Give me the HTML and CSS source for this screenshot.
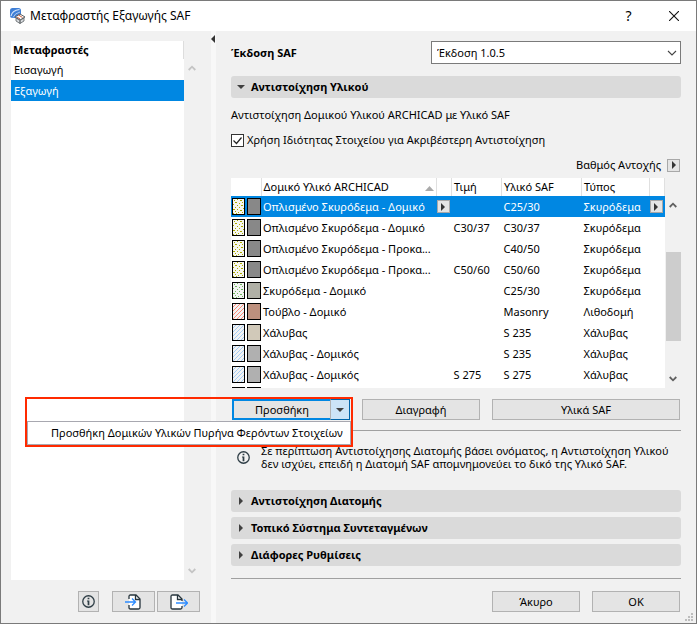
FILE: index.html
```html
<!DOCTYPE html>
<html lang="el">
<head>
<meta charset="utf-8">
<title>Μεταφραστής Εξαγωγής SAF</title>
<link rel="stylesheet" href="styles.css">
</head>
<body>
<svg class="defs" width="0" height="0" aria-hidden="true">
  <defs>
    <pattern id="dots-olive" width="11" height="15" patternUnits="userSpaceOnUse">
      <path fill="#a9a900" d="M1 1h1v1h-1zM4 0h1v1h-1zM7 1h2v1h-2zM2 3h2v1h-2zM6 4h1v1h-1zM9 3h1v1h-1zM0 5h1v1h-1zM4 6h1v1h-1zM8 6h2v1h-2zM2 8h1v1h-1zM6 8h1v1h-1zM10 9h1v1h-1zM0 10h2v1h-2zM4 10h1v1h-1zM7 11h2v1h-2zM2 12h1v1h-1zM5 13h1v1h-1zM9 13h1v1h-1zM0 14h1v1h-1zM3 14h1v1h-1z"/>
    </pattern>
    <pattern id="dots-green" width="11" height="15" patternUnits="userSpaceOnUse">
      <path fill="#6cb85a" d="M1 1h1v1h-1zM4 0h1v1h-1zM7 1h2v1h-2zM2 3h2v1h-2zM6 4h1v1h-1zM9 3h1v1h-1zM0 5h1v1h-1zM4 6h1v1h-1zM8 6h2v1h-2zM2 8h1v1h-1zM6 8h1v1h-1zM10 9h1v1h-1zM0 10h2v1h-2zM4 10h1v1h-1zM7 11h2v1h-2zM2 12h1v1h-1zM5 13h1v1h-1zM9 13h1v1h-1zM0 14h1v1h-1zM3 14h1v1h-1z"/>
    </pattern>
    <symbol id="sw-olive" viewBox="0 0 29 17"><rect width="13" height="17"/><rect x="1" y="1" width="11" height="15" fill="#f7f7ef"/><g transform="translate(1 1)"><rect width="11" height="15" fill="url(#dots-olive)"/></g><rect x="15" width="14" height="17"/><rect x="16" y="1" width="12" height="15" fill="currentColor"/></symbol>
    <symbol id="sw-green" viewBox="0 0 29 17"><rect width="13" height="17"/><rect x="1" y="1" width="11" height="15" fill="#f3f3f3"/><g transform="translate(1 1)"><rect width="11" height="15" fill="url(#dots-green)"/></g><rect x="15" width="14" height="17"/><rect x="16" y="1" width="12" height="15" fill="currentColor"/></symbol>
    <symbol id="sw-red" viewBox="0 0 29 17"><rect width="13" height="17"/><rect x="1" y="1" width="11" height="15" fill="#f3f3f3"/><path d="M1 4l3-3M1 8l7-7M1 12l11-11M1 16L12 5M5 16l7-7M9 16l3-3" stroke="#ff8a78"/><rect x="15" width="14" height="17"/><rect x="16" y="1" width="12" height="15" fill="currentColor"/></symbol>
    <symbol id="sw-blue" viewBox="0 0 29 17"><rect width="13" height="17"/><rect x="1" y="1" width="11" height="15" fill="#f3f3f3"/><path d="M1 4l3-3M1 8l7-7M1 12l11-11M1 16L12 5M5 16l7-7M9 16l3-3" stroke="#a5cdf5"/><rect x="15" width="14" height="17"/><rect x="16" y="1" width="12" height="15" fill="currentColor"/></symbol>
    <symbol id="chev-up" viewBox="0 0 8 6"><path d="M.7 5L4 1.7 7.3 5" fill="none" stroke="currentColor" stroke-width="1.8"/></symbol>
    <symbol id="chev-down" viewBox="0 0 8 6"><path d="M.7 1L4 4.3 7.3 1" fill="none" stroke="currentColor" stroke-width="1.8"/></symbol>
    <symbol id="tri-right" viewBox="0 0 4 8"><path d="M0 0l4 4-4 4z" fill="currentColor"/></symbol>
    <symbol id="tri-down" viewBox="0 0 8 4"><path d="M0 0h8L4 4z" fill="currentColor"/></symbol>
    <symbol id="info" viewBox="0 0 12 12"><circle cx="6" cy="6" r="5.3" fill="none" stroke="#2f3e46" stroke-width="1.2"/><path d="M5.2 2.5h1.6v1.4H5.2zM4.6 5h2.2v4.4H5.2V6h-.6z" fill="#2f3e46"/></symbol>
  </defs>
</svg>
<div class="window">
  <header class="titlebar">
    <svg class="app-icon" viewBox="0 0 16 16">
      <rect x="0" y="0" width="11" height="10" rx="2.5" fill="#3f7fd6"/>
      <path d="M1 8Q2 2.5 9.500 1.500" fill="none" stroke="#d6e6fa" stroke-width="1.200"/>
      <path d="M3 9.500Q5 5 10 4" fill="none" stroke="#a9caf3" stroke-width="1"/>
      <path d="M5 9l5-3 5 3-5 3z" fill="#fff" stroke="#5b5f63" stroke-width="1"/>
      <path d="M6 10v3l4 2.500V12.500zM10 12.500v3l4-2.500v-3z" fill="#d9dcdf" stroke="#5b5f63" stroke-width=".8"/>
      <path d="M8.500 7l4 2.500M7 9l3 2" stroke="#c35a3a" stroke-width="1"/>
    </svg>
    <h1>Μεταφραστής Εξαγωγής SAF</h1>
    <button class="caption help" aria-label="Βοήθεια">?</button>
    <button class="caption" aria-label="Κλείσιμο"><svg width="10" height="10" viewBox="0 0 10 10"><path d="M0 0l10 10M10 0L0 10" stroke="#111" stroke-width="1.100"/></svg></button>
  </header>
  <div class="panes">
    <aside class="side">
      <div class="list-wrap">
        <div class="list">
          <h2>Μεταφραστές</h2>
          <ul>
            <li>Εισαγωγή</li>
            <li class="selected">Εξαγωγή</li>
          </ul>
        </div>
        <div class="side-scroll">
          <svg width="8" height="6"><use href="#chev-up"/></svg>
          <svg width="8" height="6"><use href="#chev-down"/></svg>
        </div>
      </div>
      <div class="side-tools">
        <button class="btn square" aria-label="Πληροφορίες"><svg width="13" height="13"><use href="#info"/></svg></button>
        <div class="pair">
          <button class="btn tool" aria-label="Εισαγωγή"><svg width="18" height="16" viewBox="0 0 18 16"><path d="M4 5V2.500Q4 1 5.500 1H11l4 4v8.500Q15 15 13.500 15h-8Q4 15 4 13.500V11" fill="#fff" stroke="#26343c" stroke-width="1.300"/><path d="M10.500 1v4.500H15" fill="none" stroke="#26343c" stroke-width="1.300"/><path d="M0 8h10M7 4.500L10.500 8 7 11.500" fill="none" stroke="#2d8cff" stroke-width="1.300"/></svg></button>
          <button class="btn tool" aria-label="Εξαγωγή"><svg width="18" height="16" viewBox="0 0 18 16"><path d="M12 12v1.500q0 1.500-1.500 1.500h-8Q1 15 1 13.500v-11Q1 1 2.500 1H8l4 4v2" fill="#fff" stroke="#26343c" stroke-width="1.300"/><path d="M7.500 1v4.500H12" fill="none" stroke="#26343c" stroke-width="1.300"/><path d="M6 9h11M14 5.500L17.500 9 14 12.500" fill="none" stroke="#2d8cff" stroke-width="1.300"/></svg></button>
        </div>
      </div>
    </aside>
    <div class="splitter"><svg width="4" height="8" viewBox="0 0 4 8"><path d="M4 0v8L0 4z" fill="#333"/></svg></div>
    <main class="content">
      <div class="version">
        <label for="version">Έκδοση SAF</label>
        <div class="select-box">
          <select id="version"><option>Έκδοση 1.0.5</option></select>
          <svg width="10" height="6" viewBox="0 0 10 6"><path d="M1 1l4 4 4-4" fill="none" stroke="#444" stroke-width="1.100"/></svg>
        </div>
      </div>
      <button class="section open"><svg width="8" height="4"><use href="#tri-down"/></svg>Αντιστοίχηση Υλικού</button>
      <p class="intro">Αντιστοίχηση Δομικού Υλικού ARCHICAD με Υλικό SAF</p>
      <label class="check"><span class="tick"><input type="checkbox" checked><svg width="13" height="13" viewBox="0 0 13 13"><path d="M2.500 6.500l3 3 5-6" fill="none" stroke="#222" stroke-width="1.200"/></svg></span>Χρήση Ιδιότητας Στοιχείου για Ακριβέστερη Αντιστοίχηση</label>
      <div class="grade"><span>Βαθμός Αντοχής</span><button class="mini" aria-label="Βαθμός Αντοχής"><svg width="4" height="8"><use href="#tri-right"/></svg></button></div>
      <div class="grid">
        <div class="table-clip">
          <table>
            <colgroup><col class="c-sw"><col><col class="c-btn"><col class="c-val"><col class="c-saf"><col class="c-type"><col class="c-btn"></colgroup>
            <thead><tr><th></th><th class="sorted">Δομικό Υλικό ARCHICAD<svg width="9" height="5" viewBox="0 0 9 5"><path d="M0 5h9L4.500 0z" fill="#aaa"/></svg></th><th></th><th>Τιμή</th><th>Υλικό SAF</th><th>Τύπος</th><th></th></tr></thead>
            <tbody>
              <tr class="selected"><td class="gray"><svg width="29" height="17"><use href="#sw-olive"/></svg></td><td>Οπλισμένο Σκυρόδεμα - Δομικό</td><td><button class="mini" aria-label="Επιλογή υλικού"><svg width="4" height="8"><use href="#tri-right"/></svg></button></td><td></td><td>C25/30</td><td>Σκυρόδεμα</td><td><button class="mini" aria-label="Επιλογή τύπου"><svg width="4" height="8"><use href="#tri-right"/></svg></button></td></tr>
              <tr><td class="gray"><svg width="29" height="17"><use href="#sw-olive"/></svg></td><td>Οπλισμένο Σκυρόδεμα - Δομικό</td><td></td><td>C30/37</td><td>C30/37</td><td>Σκυρόδεμα</td><td></td></tr>
              <tr><td class="gray"><svg width="29" height="17"><use href="#sw-olive"/></svg></td><td>Οπλισμένο Σκυρόδεμα - Προκα...</td><td></td><td></td><td>C40/50</td><td>Σκυρόδεμα</td><td></td></tr>
              <tr><td class="gray"><svg width="29" height="17"><use href="#sw-olive"/></svg></td><td>Οπλισμένο Σκυρόδεμα - Προκα...</td><td></td><td>C50/60</td><td>C50/60</td><td>Σκυρόδεμα</td><td></td></tr>
              <tr><td class="sage"><svg width="29" height="17"><use href="#sw-green"/></svg></td><td>Σκυρόδεμα - Δομικό</td><td></td><td></td><td>C25/30</td><td>Σκυρόδεμα</td><td></td></tr>
              <tr><td class="brick"><svg width="29" height="17"><use href="#sw-red"/></svg></td><td>Τούβλο - Δομικό</td><td></td><td></td><td>Masonry</td><td>Λιθοδομή</td><td></td></tr>
              <tr><td class="sand"><svg width="29" height="17"><use href="#sw-blue"/></svg></td><td>Χάλυβας</td><td></td><td></td><td>S 235</td><td>Χάλυβας</td><td></td></tr>
              <tr><td class="silver"><svg width="29" height="17"><use href="#sw-blue"/></svg></td><td>Χάλυβας - Δομικός</td><td></td><td></td><td>S 235</td><td>Χάλυβας</td><td></td></tr>
              <tr><td class="silver"><svg width="29" height="17"><use href="#sw-blue"/></svg></td><td>Χάλυβας - Δομικός</td><td></td><td>S 275</td><td>S 275</td><td>Χάλυβας</td><td></td></tr>
              <tr><td class="silver"><svg width="29" height="17"><use href="#sw-blue"/></svg></td><td></td><td></td><td></td><td></td><td></td><td></td></tr>
            </tbody>
          </table>
        </div>
        <div class="grid-scroll">
          <svg width="8" height="6"><use href="#chev-up"/></svg>
          <div class="track"><div class="thumb"></div></div>
          <svg width="8" height="6"><use href="#chev-down"/></svg>
        </div>
      </div>
      <div class="actions">
        <div class="split">
          <button class="split-main">Προσθήκη</button><button class="split-arrow" aria-label="Περισσότερα"><svg width="8" height="4"><use href="#tri-down"/></svg></button>
          <div class="callout">
            <button class="menu-item">Προσθήκη Δομικών Υλικών Πυρήνα Φερόντων Στοιχείων</button>
          </div>
        </div>
        <button class="btn">Διαγραφή</button>
        <button class="btn">Υλικά SAF</button>
      </div>
      <div class="note">
        <svg width="13" height="13"><use href="#info"/></svg>
        <p>Σε περίπτωση Αντιστοίχησης Διατομής βάσει ονόματος, η Αντιστοίχηση Υλικού<br>δεν ισχύει, επειδή η Διατομή SAF απομνημονεύει το δικό της Υλικό SAF.</p>
      </div>
      <div class="sections">
        <button class="section"><svg width="4" height="8"><use href="#tri-right"/></svg>Αντιστοίχηση Διατομής</button>
        <button class="section"><svg width="4" height="8"><use href="#tri-right"/></svg>Τοπικό Σύστημα Συντεταγμένων</button>
        <button class="section"><svg width="4" height="8"><use href="#tri-right"/></svg>Διάφορες Ρυθμίσεις</button>
      </div>
      <footer class="footer">
        <button class="btn">Άκυρο</button>
        <button class="btn">OK</button>
      </footer>
    </main>
  </div>
  <svg class="grip" width="8" height="8" viewBox="0 0 8 8"><path fill="#bdbdbd" d="M6 0h2v2h-2zM3 3h2v2h-2zM6 3h2v2h-2zM0 6h2v2h-2zM3 6h2v2h-2zM6 6h2v2h-2z"/></svg>
</div>
</body>
</html>
```

FILE: styles.css
```css
* { box-sizing: border-box; }

body {
  margin: 0;
  background: #f1f1f1;
  color: #000;
  font: 11px/16px "Noto Sans", "Open Sans", sans-serif;
}

h1, h2, p, ul { margin: 0; padding: 0; }

button, select {
  margin: 0;
  padding: 0;
  font: inherit;
  color: inherit;
}

svg { display: block; flex: none; }

.defs { position: absolute; }

.window {
  position: relative;
  display: flex;
  flex-direction: column;
  min-height: 100vh;
  border: 1px solid #7a7a7a;
}

.titlebar {
  display: flex;
  align-items: center;
  height: 30px;
  padding-left: 9px;
  background: #fff;
}

.titlebar h1 {
  flex: 1;
  margin-left: 4px;
  font-size: 12px;
  font-weight: 400;
}

.app-icon { width: 16px; height: 16px; }

.caption {
  display: flex;
  align-items: center;
  justify-content: center;
  width: 45px;
  height: 28px;
  border: 0;
  background: none;
}

.help { font-size: 14px; }

.panes { display: flex; flex: 1; }

.side {
  display: flex;
  flex-direction: column;
  width: 210px;
  padding: 10px 11px 11px 10px;
}

.list-wrap { display: flex; flex: 1; }

.list {
  display: flex;
  flex-direction: column;
  flex: 1;
  background: #fff;
}

.list h2 {
  height: 18px;
  padding-left: 2px;
  border-right: 1px solid #ddd;
  font-size: 11px;
  line-height: 18px;
}

.list ul { list-style: none; }

.list li {
  height: 21px;
  padding-left: 3px;
  line-height: 21px;
}

.list .selected,
tbody .selected { background: #0087e2; color: #fff; }

.side-scroll {
  display: flex;
  flex-direction: column;
  justify-content: space-between;
  align-items: center;
  width: 16px;
  padding: 24px 0 6px;
  color: #c4c4c4;
}

.side-tools {
  display: flex;
  justify-content: flex-end;
  gap: 13px;
  padding-top: 11px;
}

.pair { display: flex; gap: 2px; }

.btn {
  display: flex;
  align-items: center;
  justify-content: center;
  height: 21px;
  border: 1px solid #b2b2b2;
  background: #e4e4e4;
}

.square { width: 21px; }
.tool { width: 43px; }

.splitter {
  width: 5px;
  padding-top: 4px;
  background: #f8f8f8;
}

.content {
  flex: 1;
  min-width: 0;
  padding: 10px 15px 11px;
}

.version {
  display: flex;
  align-items: center;
  justify-content: space-between;
}

.version label { font-weight: 700; }

.select-box { position: relative; width: 250px; }

.select-box select {
  display: block;
  width: 100%;
  height: 23px;
  padding: 0 5px;
  appearance: none;
  border: 1px solid #7a7a7a;
  border-radius: 0;
  background: #fff;
}

.select-box svg {
  position: absolute;
  top: 9px;
  right: 4px;
  pointer-events: none;
}

.section {
  display: flex;
  align-items: center;
  width: 100%;
  height: 22px;
  padding-left: 8px;
  gap: 8px;
  border: 0;
  border-radius: 3px;
  background: #dadada;
  font-weight: 700;
}

.section svg { color: #404040; }
.section.open { gap: 6px; padding-left: 6px; margin-top: 12px; }

.intro { margin-top: 9px; }

.check {
  display: flex;
  align-items: center;
  gap: 3px;
  margin-top: 9px;
}

.tick { position: relative; width: 13px; height: 13px; }

.tick input {
  display: block;
  width: 13px;
  height: 13px;
  margin: 0;
  appearance: none;
  border: 1px solid #333;
  background: #fff;
}

.tick svg { position: absolute; inset: 0; pointer-events: none; }

.grade {
  display: flex;
  align-items: center;
  justify-content: flex-end;
  gap: 6px;
  margin-top: 9px;
  padding-right: 1px;
}

.mini {
  display: flex;
  align-items: center;
  justify-content: center;
  width: 13px;
  height: 13px;
  border: 1px solid #a8a8a8;
  background: #e4e4e4;
  color: #333;
}

.grid { display: flex; height: 210px; margin-top: 5px; }

.table-clip {
  flex: 1;
  min-width: 0;
  overflow: hidden;
  background: #fff;
}

table {
  width: 100%;
  table-layout: fixed;
  border-collapse: collapse;
}

.c-sw { width: 30px; }
.c-btn { width: 15px; }
.c-val { width: 50px; }
.c-saf { width: 80px; }
.c-type { width: 68px; }

th {
  height: 18px;
  padding: 0 2px;
  border-right: 1px solid #e0e0e0;
  font-weight: 400;
  line-height: 18px;
  text-align: left;
  white-space: nowrap;
}

.sorted { position: relative; }
.sorted svg { position: absolute; right: 2px; bottom: 5px; }

td {
  height: 21px;
  padding: 0 2px;
  line-height: 21px;
  white-space: nowrap;
}

td:first-child { padding: 0 0 0 1px; }
td:nth-child(3), td:last-child { padding: 0; }

.gray { color: #888; }
.sage { color: #b0b0a6; }
.brick { color: #bd907e; }
.sand { color: #d1c9b9; }
.silver { color: #b0b0b0; }

.grid-scroll {
  display: flex;
  flex-direction: column;
  align-items: center;
  width: 16px;
  padding: 24px 0 6px;
  color: #606060;
}

.track { flex: 1; width: 15px; }

.thumb {
  height: 89px;
  margin-top: 44px;
  background: #cdcdcd;
}

.actions {
  display: grid;
  grid-template-columns: 118px 118px 1fr;
  gap: 12px;
  padding: 11px 1px 10px;
  border-bottom: 1px solid #a0a0a0;
}

.split {
  position: relative;
  display: flex;
  height: 21px;
}

.split-main {
  flex: 1;
  border: 2px solid #0087e2;
  border-right: 0;
  background: #e4e4e4;
}

.split-arrow {
  display: flex;
  align-items: center;
  justify-content: center;
  width: 20px;
  border: 1px solid #0064a8;
  border-left-color: #b2b2b2;
  background: #cce4f7;
  color: #404040;
}

.callout {
  position: absolute;
  top: -2px;
  right: -3px;
  display: flex;
  align-items: flex-end;
  width: 328px;
  height: 50px;
  border: 2px solid #ff2a00;
  pointer-events: none;
}

.menu-item {
  width: 100%;
  height: 24px;
  padding-left: 23px;
  border: 1px solid #a8a8b0;
  background: #fff;
  text-align: left;
  white-space: nowrap;
  pointer-events: auto;
}

.note {
  display: flex;
  align-items: center;
  gap: 11px;
  padding: 13px 0 20px 6px;
  line-height: 13px;
}

.sections { display: grid; gap: 5px; }

.footer {
  display: flex;
  justify-content: flex-end;
  gap: 12px;
  margin-top: 12px;
  padding: 12px 1px 0;
  border-top: 1px solid #a0a0a0;
}

.footer .btn { width: 88px; }

.grip { position: absolute; right: 3px; bottom: 2px; }
```
